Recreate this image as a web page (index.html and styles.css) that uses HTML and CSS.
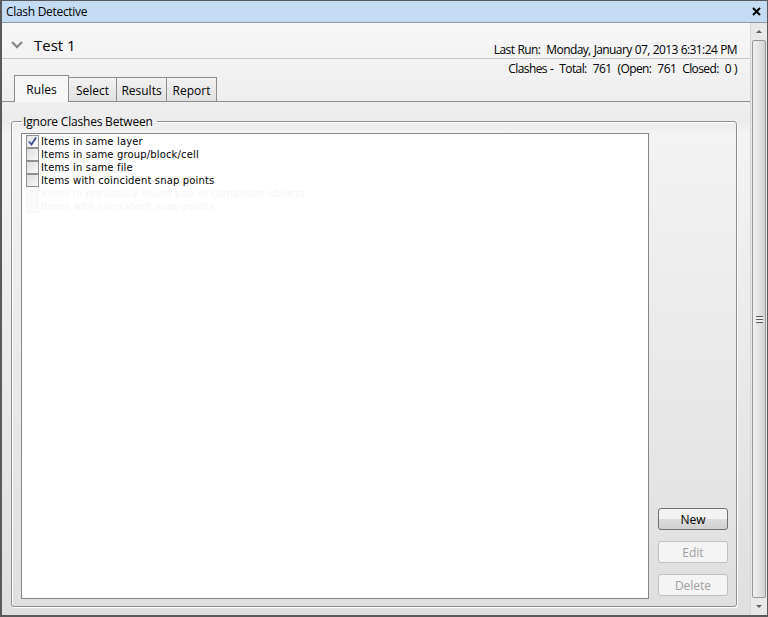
FILE: index.html
```html
<!DOCTYPE html>
<html lang="en">
<head>
    <meta charset="UTF-8">
    <title>Clash Detective</title>
    <link rel="stylesheet" href="styles.css">
</head>
<body>
    <div class="window">
        <div class="titlebar">
            <span class="title">Clash Detective</span>
            <svg class="close" width="9" height="9" viewBox="0 0 9 9">
                <path d="M1 1 L8 8 M8 1 L1 8" stroke="#000" stroke-width="2"/>
            </svg>
        </div>
        <div class="frame">
            <div class="main">
                <div class="test-header">
                    <svg class="chevron" width="12" height="8" viewBox="0 0 12 8">
                        <path d="M1 1 L6 6 L11 1" fill="none" stroke="#8a8a8a" stroke-width="2.4"/>
                    </svg>
                    <span class="test-name">Test 1</span>
                    <span class="last-run">Last Run:&nbsp; Monday, January 07, 2013 6:31:24 PM</span>
                </div>
                <div class="summary">Clashes -&nbsp; Total:&nbsp; 761&nbsp; (Open:&nbsp; 761&nbsp; Closed:&nbsp; 0 )</div>
                <div class="tabs">
                    <div class="tab active">Rules</div>
                    <div class="tab">Select</div>
                    <div class="tab">Results</div>
                    <div class="tab">Report</div>
                </div>
                <div class="panel">
                    <fieldset class="group">
                        <legend>Ignore Clashes Between</legend>
                        <div class="group-body">
                            <div class="rule-list">
                                <div class="rule"><span class="check checked">
                                    <svg width="11" height="11" viewBox="0 0 11 11"><path d="M2 5.5 L4.5 8.5 L9 1.5" fill="none" stroke="#3b4f8f" stroke-width="1.8"/></svg>
                                </span>Items in same layer</div>
                                <div class="rule"><span class="check"></span>Items in same group/block/cell</div>
                                <div class="rule"><span class="check"></span>Items in same file</div>
                                <div class="rule"><span class="check"></span>Items with coincident snap points</div>
                                <div class="rule ghost"><span class="check"></span>Items in previously found pair of composite objects</div>
                                <div class="rule ghost"><span class="check"></span>Items with coincident snap points</div>
                            </div>
                            <div class="actions">
                                <button class="btn">New</button>
                                <button class="btn" disabled>Edit</button>
                                <button class="btn" disabled>Delete</button>
                            </div>
                        </div>
                    </fieldset>
                </div>
            </div>
            <div class="scrollbar">
                <div class="arrow up"></div>
                <div class="thumb"><span class="grip"></span></div>
                <div class="arrow down"></div>
            </div>
        </div>
    </div>
</body>
</html>
```
FILE: styles.css
```css
html, body {
    margin: 0;
    padding: 0;
}
body {
    font-family: "Open Sans", "Noto Sans", sans-serif;
    font-size: 12px;
    color: #000;
    background: #fff;
}
.window {
    width: 768px;
    height: 617px;
    box-sizing: border-box;
    border: 1px solid #5a5a5a;
    border-left-width: 2px;
    border-bottom-width: 2px;
    display: flex;
    flex-direction: column;
}
.titlebar {
    height: 21px;
    background-color: #c4dcf3;
    border-bottom: 1px solid #8e9aa6;
    display: flex;
    align-items: center;
    justify-content: space-between;
    padding: 0 6px 0 4px;
}
.title {
    font-size: 12px;
    letter-spacing: -0.3px;
}
.frame {
    flex: 1;
    display: flex;
    min-height: 0;
}
.main {
    flex: 1;
    display: flex;
    flex-direction: column;
    background: linear-gradient(#f7f7f7, #ececec 100px, #f3f3f3 110px, #dfdfdf);
}
.test-header {
    height: 36px;
    box-sizing: border-box;
    border-bottom: 1px solid #c9c9c9;
    display: flex;
    align-items: center;
    padding: 0 13px 0 9px;
}
.chevron {
    margin-right: 11px;
    margin-top: 8px;
}
.test-name {
    font-size: 15px;
    margin-top: 8px;
}
.last-run {
    margin-left: auto;
    margin-top: 17px;
    letter-spacing: -0.6px;
    word-spacing: 0.5px;
}
.summary {
    text-align: right;
    padding: 1px 13px 0 0;
    height: 15px;
    letter-spacing: -0.6px;
    word-spacing: 0.5px;
}
.tabs {
    display: flex;
    align-items: flex-end;
    height: 26px;
    padding-left: 12px;
    border-bottom: 1px solid #8c8c8c;
}
.tab {
    height: 24px;
    box-sizing: border-box;
    border: 1px solid #8c8c8c;
    border-bottom: none;
    border-left: none;
    padding: 4px 0 0;
    text-align: center;
    background: linear-gradient(#f2f2f2, #e1e1e1);
    font-size: 12px;
}
.tab:nth-child(2) { width: 48px; }
.tab:nth-child(3) { width: 50px; }
.tab:nth-child(4) { width: 50px; }
.tab.active {
    width: 55px;
    height: 27px;
    border-left: 1px solid #8c8c8c;
    background: #f7f7f7;
    margin-bottom: -1px;
    padding-top: 5px;
}
.panel {
    flex: 1;
    padding: 11px 13px 8px 9px;
    display: flex;
}
.group {
    flex: 1;
    margin: 0;
    padding: 3px 8px 7px 9px;
    border: 1px solid #8f8f8f;
    border-radius: 3px;
    box-shadow: inset 1px 1px 0 #fff, 1px 1px 0 #fff;
    display: flex;
}
.group legend {
    padding: 0 4px 0 1px;
    margin-left: 1px;
    font-size: 12px;
    letter-spacing: -0.2px;
}
.group-body {
    flex: 1;
    display: flex;
}
.rule-list {
    width: 628px;
    box-sizing: border-box;
    background: #fff;
    border: 1px solid #828790;
    padding: 1px 4px;
    font-family: "DejaVu Sans", sans-serif;
    font-size: 10px;
    letter-spacing: 0.15px;
}
.rule {
    height: 13px;
    display: flex;
    align-items: center;
    white-space: nowrap;
}
.check {
    width: 11px;
    height: 11px;
    border: 1px solid #8e8f8f;
    background: linear-gradient(135deg, #dcdcdc, #f8f8f8);
    margin-right: 2px;
    display: inline-flex;
    align-items: center;
    justify-content: center;
}
.check.checked {
    background: linear-gradient(135deg, #e2e2e2, #fafafa);
}
.rule.ghost {
    color: #f5f5f5;
}
.rule.ghost .check {
    border-color: #f5f5f5;
    background: #fafafa;
}
.actions {
    flex: 1;
    display: flex;
    flex-direction: column;
    justify-content: flex-end;
    align-items: flex-end;
    gap: 11px;
    padding-bottom: 3px;
}
.btn {
    width: 70px;
    height: 22px;
    margin-right: 0;
    font-family: "Open Sans", "Noto Sans", sans-serif;
    font-size: 12px;
    border: 1px solid #707070;
    border-radius: 3px;
    background: linear-gradient(#f2f2f2 50%, #dcdcdc 50%, #d0d0d0);
    color: #000;
    padding: 0;
}
.btn:disabled {
    border-color: #bfbfbf;
    background: #f4f4f4;
    color: #a0a0a0;
}
.scrollbar {
    width: 16px;
    display: flex;
    flex-direction: column;
    background: #e8e8e8;
    border-left: 1px solid #d7d7d7;
}
.arrow {
    height: 17px;
    position: relative;
}
.arrow::after {
    content: "";
    position: absolute;
    left: 5px;
    top: 7px;
    border-left: 3px solid transparent;
    border-right: 3px solid transparent;
}
.arrow.up::after {
    border-bottom: 3px solid #606060;
}
.arrow.down::after {
    border-top: 3px solid #606060;
}
.thumb {
    flex: 1;
    margin: 0 1px;
    border: 1px solid #979797;
    border-radius: 2px;
    background: linear-gradient(90deg, #f0f0f0, #e3e3e3 50%, #d2d2d2);
    display: flex;
    align-items: center;
    justify-content: center;
}
.grip {
    width: 7px;
    height: 7px;
    background: repeating-linear-gradient(#5a5a5a 0 1px, #f0f0f0 1px 3px);
}
```
